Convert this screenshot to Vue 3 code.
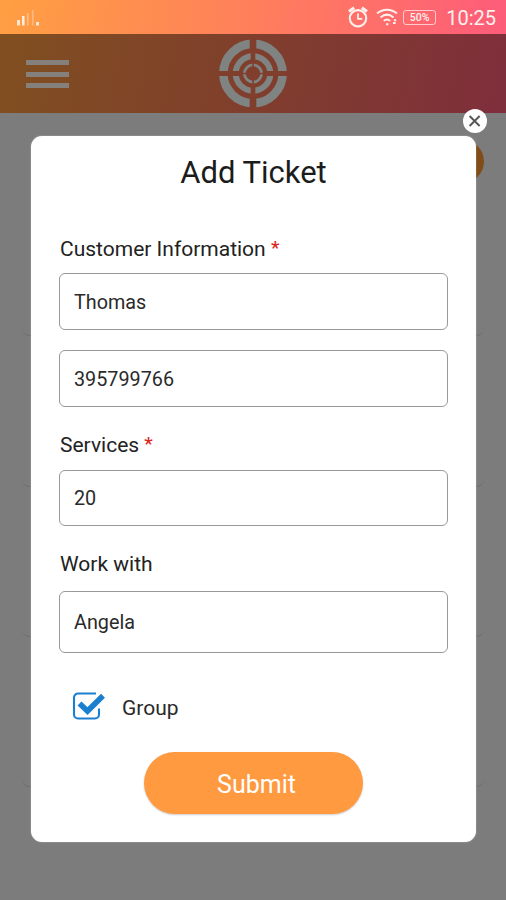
<script setup>
import { ref } from 'vue'

const customer = ref('Thomas')
const phone = ref('395799766')
const services = ref('20')
const partner = ref('Angela')
const group = ref(true)
const rows = [1, 2, 3, 4]
</script>

<template>
  <div class="screen">
    <header class="status">
      <svg class="signal" width="24" height="20" viewBox="0 0 24 20">
        <g fill="#fff">
          <rect x="1" y="13" width="3" height="5.5" opacity=".75" />
          <rect x="6" y="9" width="2.6" height="9.5" opacity=".8" />
          <rect x="11" y="6" width="1.6" height="12.5" opacity=".35" />
          <rect x="16" y="3" width="1.6" height="15.5" opacity=".3" />
          <rect x="20" y="15" width="3" height="3.5" opacity=".75" />
        </g>
      </svg>
      <div class="indicators">
        <svg class="alarm" width="20" height="22" viewBox="0 0 20 22" fill="none" stroke="#fff1ee">
          <circle cx="10" cy="12.3" r="8.2" stroke-width="2.1" />
          <path d="M10 7.6v5.3h4.3" stroke-width="1.7" />
          <path d="M1 5.4 6.2 1.8M19 5.4 13.8 1.8" stroke-width="3" />
        </svg>
        <svg class="wifi" width="22" height="18" viewBox="0 0 22 18" fill="none" stroke="#fff1ee">
          <path d="M1 5.6C7 .5 15 .5 21 5.6" stroke-width="2" />
          <path d="M4.5 9.4c4-3.4 9-3.4 13 0" stroke-width="2" />
          <path d="M7.8 12.9c2-1.8 4.4-1.8 6.4 0" stroke-width="1.8" />
          <path d="M10 16.2h2.4M17 15h2.6M18 12.2h2.2" stroke-width="2" />
        </svg>
        <span class="battery">50%</span>
        <span class="clock">10:25</span>
      </div>
    </header>

    <nav class="topbar">
      <button class="menu" aria-label="Menu"><i></i><i></i><i></i></button>
      <svg class="logo" width="68" height="69" viewBox="0 0 68 69" fill="none">
        <g stroke="#7f8381">
          <circle cx="34" cy="34.5" r="29.6" stroke-width="8.6" />
          <circle cx="34" cy="34.5" r="17.3" stroke-width="6" />
          <circle cx="34" cy="34.5" r="8.6" stroke-width="2.8" />
        </g>
        <g class="gaps">
          <path d="M34 0v12M34 57v12" stroke-width="6.6" />
          <path d="M34 12v11M34 46v11" stroke-width="4.6" />
          <path d="M0 34.5h23M45 34.5h23" stroke-width="5" />
          <path d="M34 22v6M34 41v6M22 34.5h6M40 34.5h6" stroke-width="1.6" />
        </g>
      </svg>
    </nav>

    <main class="page">
      <div class="toolbar"><span class="add"></span></div>
      <div v-for="r in rows" :key="r" class="row"></div>
    </main>

    <section class="modal">
      <button class="close" aria-label="Close">
        <svg width="24" height="24" viewBox="0 0 24 24"><path d="m6.6 7 10 10M16.6 7l-10 10" stroke="#555" stroke-width="1.9" /></svg>
      </button>
      <h1>Add Ticket</h1>
      <label class="lab first">Customer Information <b>*</b></label>
      <input v-model="customer" class="field low" />
      <input v-model="phone" class="field low second" />
      <label class="lab services">Services <b>*</b></label>
      <input v-model="services" class="field short" />
      <label class="lab work">Work with</label>
      <input v-model="partner" class="field tall" />
      <div class="check" @click="group = !group">
        <svg width="34" height="30" viewBox="0 0 34 30" fill="none" stroke="#1b7fcf">
          <path d="M24 2.5H6a4 4 0 0 0-4 4V23.5a4 4 0 0 0 4 4h17a4 4 0 0 0 4-4v-6" stroke-width="2.1" />
          <path v-if="group" d="m7.5 12.5 8 7.5L31 4.8" stroke-width="5.6" />
        </svg>
        <span>Group</span>
      </div>
      <button class="submit">Submit</button>
    </section>
  </div>
</template>

<style>
body {
  background: #7c7c7c;
}
</style>

<style scoped>
.screen {
  position: relative;
  width: 506px;
  height: 900px;
  overflow: hidden;
  background: #7c7c7c;
  font-family: Roboto, "Liberation Sans", sans-serif;
}
.screen * {
  box-sizing: border-box;
}
button {
  border: 0;
  padding: 0;
  font-family: inherit;
}
.status {
  height: 34px;
  display: flex;
  justify-content: space-between;
  background: linear-gradient(97deg, #ff9f42 0%, #ff7f5c 50%, #fd5c7a 100%);
}
.signal {
  margin: 7px 0 0 16px;
}
.indicators {
  display: flex;
  align-items: center;
  height: 34px;
  padding-right: 10px;
  color: #fff1ee;
}
.wifi {
  margin-left: 8px;
}
.battery {
  width: 33px;
  height: 15px;
  margin-left: 5px;
  border: 1px solid rgba(255, 255, 255, 0.65);
  border-radius: 3px;
  font-size: 10.5px;
  font-weight: 500;
  line-height: 14px;
  text-align: center;
}
.clock {
  margin-left: 10px;
  padding-top: 2px;
  font-size: 20px;
  line-height: 24px;
}
.topbar {
  height: 79px;
  display: flex;
  background: linear-gradient(100deg, #804f20 0%, #803f2c 48%, #7f2e3b 100%);
}
.menu {
  display: flex;
  flex-direction: column;
  gap: 6.5px;
  width: 43px;
  margin: 26px 0 0 26px;
  background: none;
}
.menu i {
  height: 5px;
  background: #85807c;
}
.logo {
  margin: 5px 0 0 150px;
}
.gaps {
  stroke: #803f2c;
}
.page {
  padding: 0 22px;
}
.toolbar {
  height: 73px;
  padding-top: 27px;
  display: flex;
  justify-content: flex-end;
}
.add {
  width: 120px;
  height: 43px;
  border-radius: 22px;
  background: #804d18;
}
.row {
  height: 150.3px;
  border-radius: 8px;
  border-bottom: 1px solid #6d6d6d;
}
.modal {
  position: absolute;
  left: 31px;
  top: 136px;
  width: 445px;
  height: 706px;
  padding: 0 28px;
  display: flex;
  flex-direction: column;
  border-radius: 11px;
  background: #fff;
  box-shadow: 0 0 2px rgba(255, 255, 255, 0.4);
}
.close {
  position: absolute;
  right: -10.5px;
  top: -27px;
  width: 24px;
  height: 24px;
  border-radius: 50%;
  background: #fff;
}
.close svg {
  display: block;
}
h1 {
  margin: 18px 0 0;
  font-size: 31px;
  line-height: 38px;
  font-weight: 400;
  text-align: center;
  color: #1c1c1c;
}
.lab {
  display: block;
  padding-left: 1px;
  font-size: 21px;
  line-height: 26px;
  color: #222;
}
.lab b {
  font-size: 19px;
  font-weight: 500;
  line-height: 0;
  vertical-align: 2px;
  color: #dc2622;
}
.first {
  margin-top: 44px;
}
.field {
  flex: none;
  width: 389px;
  height: 57px;
  padding: 0 14px;
  border: 1px solid #999;
  border-radius: 6px;
  outline: 0;
  background: #fff;
  font-family: inherit;
  font-size: 19.8px;
  color: #2a2a2a;
}
.low {
  padding-top: 2px;
}
.first + .field {
  margin-top: 11px;
}
.second {
  margin-top: 20px;
}
.services {
  margin-top: 25px;
}
.short {
  height: 56px;
  margin-top: 12px;
}
.work {
  margin-top: 25px;
}
.tall {
  height: 62px;
  margin-top: 14px;
}
.check {
  display: flex;
  align-items: center;
  gap: 15px;
  margin: 38px 0 0 13px;
  font-size: 21px;
  line-height: 30px;
  color: #2a2a2a;
}
.check svg {
  margin-top: -2px;
}
.check span {
  padding: 2px 0 0 1px;
}
.submit {
  align-self: center;
  flex: none;
  width: 219px;
  height: 62px;
  margin: 29px 0 0;
  padding: 3px 0 0 6px;
  border-radius: 31px;
  background: #ff9a40;
  box-shadow: 0 1px 2px rgba(0, 0, 0, 0.2);
  color: #fff;
  font-size: 25px;
}
</style>
